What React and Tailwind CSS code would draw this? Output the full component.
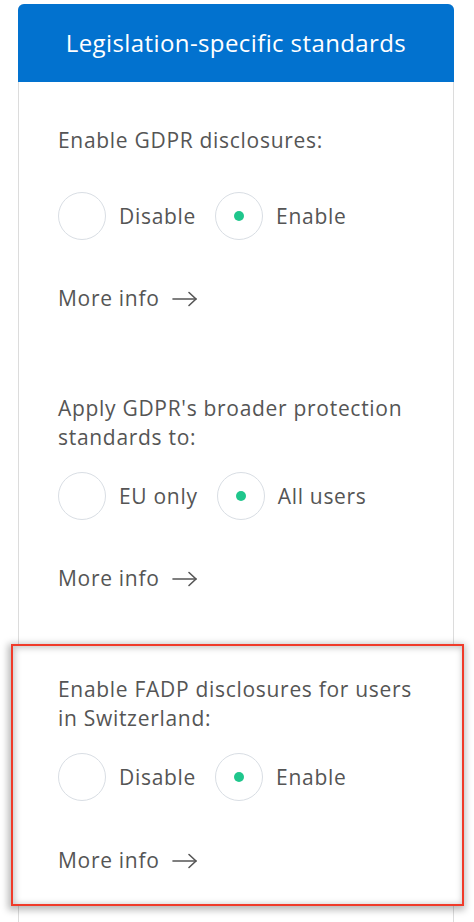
import React from "react";

const font = { fontFamily: "'Open Sans', 'Noto Sans', sans-serif" };

function Radio({ checked, label }) {
  return (
    <div className="flex items-center">
      <div className="w-[48px] h-[48px] rounded-full border border-[#d9dee4] bg-white flex items-center justify-center shrink-0">
        {checked && <div className="w-[10px] h-[10px] rounded-full bg-[#1fc68c]" />}
      </div>
      <span className="ml-[13px] text-[21px] tracking-[0.7px] text-[#555555] leading-[29px]">{label}</span>
    </div>
  );
}

function MoreInfo({ className }) {
  return (
    <div className={"flex items-center h-[29px] text-[21px] tracking-[0.7px] text-[#555555] " + className}>
      <span>More info</span>
      <svg className="ml-[12px]" width="26" height="16" viewBox="0 0 26 16" fill="none" stroke="#555555" strokeWidth="1.6" strokeLinecap="round" strokeLinejoin="round">
        <path d="M1 8H24" />
        <path d="M17 1.5L24 8L17 14.5" />
      </svg>
    </div>
  );
}

export default function App() {
  return (
    <div className="w-[474px] h-[922px] bg-white overflow-hidden pt-[4px]" style={font}>
      <div className="ml-[18px] w-[436px] border border-[#dcdcdc] rounded-t-[6px] bg-white min-h-[960px]">
        <div className="h-[78px] -mt-px -mx-px bg-[#0272cf] rounded-t-[6px] flex items-center justify-center">
          <span className="text-white text-[24px] tracking-[0.4px] leading-none">Legislation-specific standards</span>
        </div>

        <div className="pl-[39px] pr-[10px]">
          <div className="pt-[44px] text-[21px] tracking-[0.7px] leading-[29px] text-[#555555]">Enable GDPR disclosures:</div>
          <div className="mt-[37px] flex items-center gap-[19px]">
            <Radio label="Disable" />
            <Radio checked label="Enable" />
          </div>
          <MoreInfo className="mt-[44px]" />

          <div className="mt-[81px] text-[21px] tracking-[0.7px] leading-[29px] text-[#555555] whitespace-nowrap">
            Apply GDPR's broader protection<br />standards to:
          </div>
          <div className="mt-[20px] flex items-center gap-[19px]">
            <Radio label="EU only" />
            <Radio checked label="All users" />
          </div>
          <MoreInfo className="mt-[44px]" />
        </div>

        <div className="mt-[51px] -ml-[8px] -mr-[11px] border-2 border-[#f03b2a] shadow-[-1px_2px_7px_2px_rgba(0,0,0,0.28),inset_1px_1px_6px_1px_rgba(0,0,0,0.22)] pl-[45px] pt-[29px] pb-[29px] bg-white relative">
          <div className="text-[21px] tracking-[0.7px] leading-[29px] text-[#555555] whitespace-nowrap">
            Enable FADP disclosures for users<br />in Switzerland:
          </div>
          <div className="mt-[20px] flex items-center gap-[19px]">
            <Radio label="Disable" />
            <Radio checked label="Enable" />
          </div>
          <MoreInfo className="mt-[45px]" />
        </div>
      </div>
    </div>
  );
}
